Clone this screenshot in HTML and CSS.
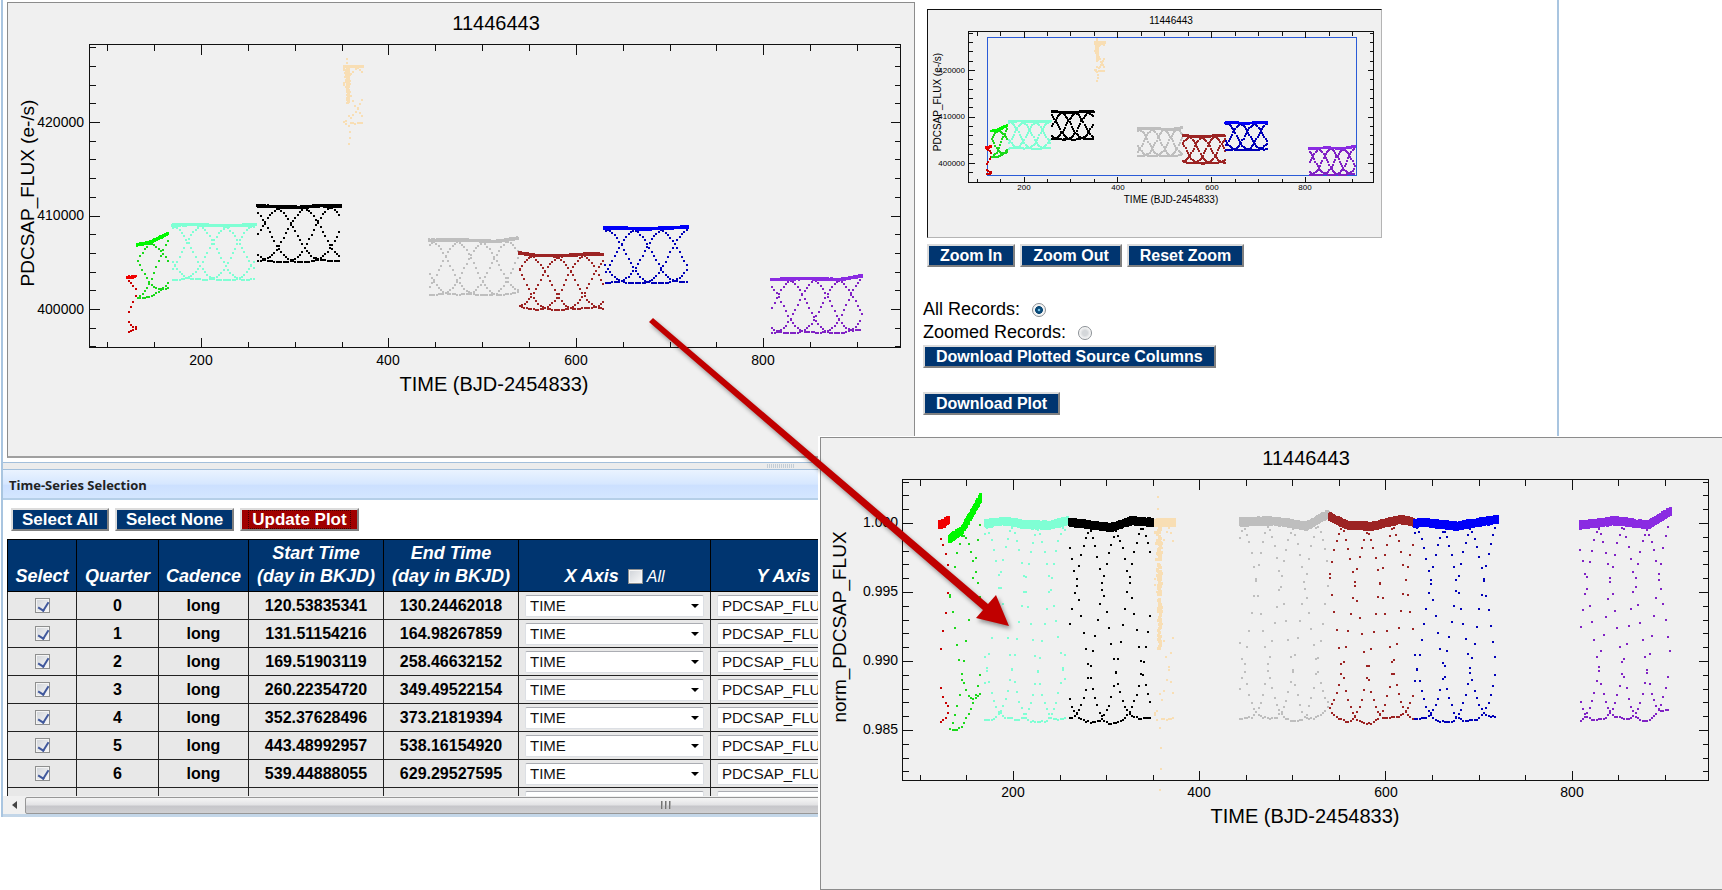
FILE: index.html
```html
<!DOCTYPE html>
<html lang="en">
<head>
<meta charset="utf-8">
<title>11446443 time series</title>
<link rel="stylesheet" href="styles.css">
</head>
<body>
<main class="stage">
  <div class="workbench">
    <section class="top">
      <div class="plot">
        <svg id="flux" viewBox="8 3 906 453">
          <g class="label">
            <text x="496" y="30">11446443</text>
            <text x="494" y="391">TIME (BJD-2454833)</text>
            <text class="vertical" transform="translate(34 193) rotate(-90)">PDCSAP_FLUX (e-/s)</text>
          </g>
          <g class="tick">
            <text x="201" y="365">200</text><text x="388" y="365">400</text><text x="576" y="365">600</text><text x="763" y="365">800</text>
          </g>
          <g class="tick end">
            <text x="84" y="127">420000</text><text x="84" y="220">410000</text><text x="84" y="314">400000</text>
          </g>
        </svg>
      </div>
      <div class="side">
        <div class="overview">
          <svg id="mini" viewBox="928 10 453 227">
            <g class="label small">
              <text x="1171" y="24">11446443</text>
              <text x="1171" y="203">TIME (BJD-2454833)</text>
              <text transform="translate(941 102) rotate(-90)">PDCSAP_FLUX (e-/s)</text>
            </g>
            <g class="tick small">
              <text x="1024" y="190">200</text><text x="1118" y="190">400</text><text x="1212" y="190">600</text><text x="1305" y="190">800</text>
            </g>
            <g class="tick small end">
              <text x="965" y="73">420000</text><text x="965" y="119">410000</text><text x="965" y="166">400000</text>
            </g>
            <rect class="window" x="987.5" y="37.5" width="369" height="138"/>
          </svg>
        </div>
        <div class="row zoom">
          <button class="btn">Zoom In</button>
          <button class="btn">Zoom Out</button>
          <button class="btn">Reset Zoom</button>
        </div>
        <div class="records">
          <div class="record"><label for="all">All Records:</label><input type="radio" id="all" name="records" checked></div>
          <div class="record"><label for="zoomed">Zoomed Records:</label><input type="radio" id="zoomed" name="records"></div>
        </div>
        <div class="downloads">
          <button class="btn">Download Plotted Source Columns</button>
          <button class="btn">Download Plot</button>
        </div>
      </div>
    </section>
    <div class="splitter"><span class="grip"></span></div>
    <section class="selection">
      <h2 class="heading">Time-Series Selection</h2>
      <div class="row toolbar">
        <button class="btn big">Select All</button>
        <button class="btn big">Select None</button>
        <button class="btn big update"><span>Update Plot</span></button>
      </div>
      <div class="viewport">
        <table class="grid">
          <colgroup><col class="c-select"><col class="c-quarter"><col class="c-cadence"><col class="c-time"><col class="c-time"><col class="c-axis"><col class="c-axis"></colgroup>
          <thead>
            <tr>
              <th>Select</th><th>Quarter</th><th>Cadence</th><th>Start Time<br>(day in BKJD)</th><th>End Time<br>(day in BKJD)</th>
              <th><span class="axis">X Axis <input type="checkbox" id="xall"><label for="xall">All</label></span></th>
              <th><span class="axis">Y Axis <input type="checkbox" id="yall"><label for="yall">All</label></span></th>
            </tr>
          </thead>
          <tbody id="rows"></tbody>
        </table>
      </div>
      <div class="scrollbar"><span class="arrow"></span><span class="thumb"><i></i><i></i><i></i></span></div>
    </section>
  </div>

  <div class="popup">
    <div class="popup-frame">
      <svg id="norm" viewBox="821 438 901 451">
        <g class="label">
          <text x="1306" y="465">11446443</text>
          <text x="1305" y="823">TIME (BJD-2454833)</text>
          <text class="vertical" transform="translate(846 627) rotate(-90)">norm_PDCSAP_FLUX</text>
        </g>
        <g class="tick">
          <text x="1013" y="797">200</text><text x="1199" y="797">400</text><text x="1386" y="797">600</text><text x="1572" y="797">800</text>
        </g>
        <g class="tick end">
          <text x="898" y="527">1.000</text><text x="898" y="596">0.995</text><text x="898" y="665">0.990</text><text x="898" y="734">0.985</text>
        </g>
      </svg>
    </div>
  </div>
  <svg class="pointer" viewBox="0 0 400 340" aria-hidden="true">
    <path d="M13 8 L348 294 L356 285 L369 316 L336 308 L343 300 L9 12 Z" fill="#c00000"/>
  </svg>
</main>
<script src="plots.js"></script>
</body>
</html>
```

FILE: styles.css
```css
* { box-sizing: border-box; }
body { margin: 0; background: #fff; color: #000; font-family: "Liberation Sans", Arial, sans-serif; }
button, select, input { font-family: inherit; margin: 0; }
svg { display: block; width: 100%; height: auto; }

.stage { position: relative; overflow: hidden; min-height: 100vh; }
.workbench { max-width: 1558px; margin-left: 1px; border: 2px solid #a9c5e0; border-width: 0 2px; }
.top { display: flex; align-items: flex-start; padding: 2px 0 5px 4px; }
.plot { flex: 0 1 908px; background: #f0f0f0; border: 1px solid #8c8c8c; border-bottom: 2px solid #a0a0a0; margin-bottom: -1px; }
.side { flex: 1; padding: 7px 0 0 8px; min-width: 0; }
.overview { max-width: 455px; margin-left: 4px; background: #f0f0f0; border: 1px solid #111; border-right-color: #b4b4b4; border-bottom-color: #b4b4b4; }

.label { font-size: 20px; text-anchor: middle; }
.label .vertical { font-size: 19px; }
.tick { font-size: 14px; text-anchor: middle; }
.end { text-anchor: end; }
.label.small { font-size: 10px; }
.tick.small { font-size: 8px; }
.frame, .ticks { fill: none; stroke: #111; stroke-width: 1; shape-rendering: crispEdges; }
.dots { fill: none; shape-rendering: crispEdges; }
.window { fill: none; stroke: #2a5bd7; shape-rendering: crispEdges; }

.row { display: flex; }
.btn { height: 23px; padding: 0 11px; border: 2px solid; border-color: #dcdcdc #808080 #808080 #dcdcdc; background: #003570; color: #fff; font-size: 16px; font-weight: bold; line-height: 18px; white-space: nowrap; }
.btn.big { padding: 0 9px; font-size: 17px; }
.btn.update { background: #a00000; padding: 0 6px; }
.update span { display: block; padding: 0 3px; border: 1px dotted #400000; line-height: 17px; }
.zoom { gap: 5px; padding: 6px 0 0 4px; }
.records { padding-top: 31px; font-size: 18px; }
.record { display: flex; align-items: center; gap: 12px; height: 23px; }
.record input { appearance: none; width: 14px; height: 14px; border: 1px solid #8a8f94; border-radius: 50%; background: radial-gradient(circle, #d4d7da 30%, #fafafa 70%); }
.record input:checked { background: radial-gradient(circle, #7cc8ec 8%, #0b4a78 20%, #0b4a78 42%, #f4f4f4 50%); }
.downloads { display: flex; flex-direction: column; align-items: flex-start; gap: 24px; padding-top: 1px; }

.splitter { display: flex; justify-content: center; align-items: center; height: 8px; background: #ececec; border-top: 1px solid #a3bfdb; border-bottom: 1px solid #a3bfdb; }
.grip { width: 27px; height: 4px; background: repeating-linear-gradient(90deg, #c3cdd6 0 1px, #ececec 1px 2px); }
.heading { margin: 0; height: 30px; padding-left: 6px; border-bottom: 2px solid #b5cfe8; background: linear-gradient(#eaf3ff, #d6e7ff 50%, #cce0ff 55%, #d4e6ff); color: #222; font: bold 13px/30px "Open Sans", "Noto Sans", sans-serif; }
.toolbar { gap: 6px; padding: 8px 0 8px 8px; }
.viewport { height: 257px; overflow: hidden; padding-left: 4px; }
.selection { border-bottom: 3px solid #c3d6e8; }

.grid { width: 894px; table-layout: fixed; border-collapse: collapse; }
.c-select { width: 69px; }
.c-quarter { width: 82px; }
.c-cadence { width: 90px; }
.c-time { width: 135px; }
.c-axis { width: 192px; }
.grid th { height: 52px; padding: 2px 0 3px; background: #003570; color: #fff; border: 1px solid #000; font-size: 18px; font-style: italic; line-height: 23px; vertical-align: bottom; white-space: nowrap; }
.grid td { height: 28px; padding: 0; background: #e8e8e8; border: 1px solid #222; font-size: 16px; font-weight: bold; text-align: center; vertical-align: middle; }
.axis { display: inline-flex; align-items: center; gap: 4px; }
.axis input { margin-left: 5px; }
.axis label { font-size: 16px; font-weight: normal; }
.grid input { appearance: none; position: relative; display: block; width: 15px; height: 15px; border: 1px solid #8e8f8f; background: linear-gradient(135deg, #cfd3d8, #fafafa); box-shadow: inset 0 0 0 1px #f4f4f4; }
.grid td input { margin: 0 auto; }
.grid input:checked::after { content: ""; position: absolute; left: 4px; top: 1px; width: 5px; height: 9px; border: solid #40589c; border-width: 0 2px 2px 0; transform: rotate(32deg); }
.pick { display: block; position: relative; margin: 0 6px; }
.pick::after { content: ""; position: absolute; right: 5px; top: 9px; border: 4px solid transparent; border-top-color: #000; border-bottom: 0; }
.pick select { display: block; appearance: none; width: 100%; height: 22px; padding: 0 4px; border: 1px solid #dcdfe4; border-top-color: #abadb3; border-radius: 2px; background: #fff; color: #111; font-size: 15px; }

.scrollbar { display: flex; align-items: center; height: 18px; background: #f0f0f0; }
.arrow { width: 22px; display: flex; justify-content: center; }
.arrow::after { content: ""; border: 4px solid transparent; border-right: 5px solid #444; border-left: 0; }
.thumb { display: flex; justify-content: center; align-items: center; gap: 2px; width: 82.5%; height: 17px; border: 1px solid #979797; border-radius: 2px; background: linear-gradient(#f5f5f5, #e3e3e5 45%, #c6c6ca 55%, #d0d0d3); }
.thumb i { width: 2px; height: 8px; background: linear-gradient(90deg, #555, #ccc); }

.popup { position: absolute; left: 818px; right: 0; top: 436px; padding: 1px 0 0 2px; background: #fff; }
.popup-frame { border: 1px solid #8c8c8c; border-right: 0; background: #f0f0f0; }
.pointer { position: absolute; left: 640px; top: 310px; width: 400px; filter: drop-shadow(2px 3px 2px rgba(0, 0, 0, .4)); pointer-events: none; }
```

FILE: plots.js
```js
const SVG = "http://www.w3.org/2000/svg";

// Each series: time span, colour, median flux, out-of-transit trend in parts per thousand.
const series = [
  { t0: 120.53835341, t1: 130.24462018, color: "#c80000", band: "#f00000", median: 403400, trend: [[0, -.1], [.5, 0], [1, .3]] },
  { t0: 131.51154216, t1: 164.98267859, color: "#1bd81b", band: "#00f800", median: 407300, trend: [[0, -1.1], [.4, -.5], [.7, .7], [1, 1.9]] },
  { t0: 169.51903119, t1: 258.46632152, color: "#7fffd4", median: 408960, trend: [[0, 0], [.25, .2], [.5, -.1], [.8, -.1], [1, .2]] },
  { t0: 260.22354720, t1: 349.49522154, color: "#000000", median: 410980, trend: [[0, .1], [.5, -.3], [.75, .2], [1, .1]] },
  { t0: 352.37628496, t1: 373.21819394, color: "#f8deb4", median: 425900, trend: [[0, .05], [1, .1]], dip: true },
  { t0: 443.48992957, t1: 538.16154920, color: "#bebebe", median: 407300, trend: [[0, .1], [.3, .2], [.5, .1], [.75, -.2], [1, .7]] },
  { t0: 539.44888055, t1: 629.29527595, color: "#9c2424", median: 405780, trend: [[0, .5], [.2, -.1], [.5, -.2], [.85, .3], [1, .1]] },
  { t0: 630.19546, t1: 719.54844, color: "#0000b8", band: "#0000f8", median: 408640, trend: [[0, 0], [.1, .1], [.5, -.2], [1, .3]] },
  { t0: 808.51558, t1: 905.92602, color: "#8022c4", band: "#8a2be2", median: 403190, trend: [[0, -.1], [.4, .2], [.75, -.1], [1, .9]] }
];

const PERIOD = 2.470613, EPOCH = 122.763, CADENCE = 0.0204336;
let seed = 7;
const rand = () => (seed = (seed * 16807) % 2147483647) / 2147483647;

function trend(points, f) {
  for (let i = 1; i < points.length; i++) {
    const [a, u] = points[i - 1], [b, v] = points[i];
    if (f <= b) return u + (v - u) * (f - a) / (b - a);
  }
  return points[points.length - 1][1];
}

function eclipse(dt) {
  let sum = 0;
  for (let k = -3; k <= 3; k++) {
    const t = dt + k * CADENCE / 7;
    const z = Math.sqrt(0.7293 + (t / 0.0509) ** 2);
    const x = Math.max(0, Math.min(1, (1.125 - z) / 0.25));
    sum += x * x * (3 - 2 * x);
  }
  return sum / 7 * 14.3;
}

for (const s of series) {
  const n = Math.round((s.t1 - s.t0) / CADENCE);
  s.points = [];
  for (let i = 0; i <= n; i++) {
    const t = s.t0 + (s.t1 - s.t0) * i / n;
    const phase = (t - EPOCH) / PERIOD;
    const depth = eclipse((phase - Math.round(phase)) * PERIOD);
    let v = trend(s.trend, i / n) - depth + (rand() + rand() - 1) * (depth > .1 ? .08 : .25);
    if (s.dip && t > 355.8 && t < 358.6) v -= rand() * 9.2;
    if (s.dip && t < 355.8 && rand() < .12) v -= rand() * 4;
    s.points.push([t, 1 + v / 1000, depth > .1]);
  }
  if (s.dip) s.points.push([356, 1.0019, true], [356, 1.001, true], [359, .9837, true], [359, .9822, true]);
}

function add(svg, cls, d, extra = {}) {
  const p = document.createElementNS(SVG, "path");
  p.setAttribute("class", cls);
  p.setAttribute("d", d);
  for (const k in extra) p.setAttribute(k, extra[k]);
  svg.appendChild(p);
}

function draw(id, c) {
  const svg = document.getElementById(id);
  const { left: l, right: r, top: t, bottom: b } = c;
  add(svg, "frame", `M${l} ${t}H${r}V${b}H${l}Z`);
  let d = "";
  for (let x = 100; x <= 900; x += 50) {
    const px = Math.round(c.x(x)) + .5, len = x % 200 ? c.minor : c.major;
    d += `M${px} ${t}v${len}M${px} ${b}v${-len}`;
  }
  c.yTicks.forEach(([v, major]) => {
    const py = Math.round(c.y(v)) + .5, len = major ? c.major : c.minor;
    d += `M${l} ${py}h${len}M${r} ${py}h${-len}`;
  });
  add(svg, "ticks", d);
  for (const s of series) {
    const seen = [new Set(), new Set()];
    for (const [time, v, inside] of s.points) {
      const y = c.y(c.flux ? v * s.median : v);
      seen[inside ? 0 : 1].add(`M${Math.round(c.x(time)) - 1} ${Math.round(y)}`);
    }
    seen.forEach((set, i) => add(svg, "dots", [...set].map(m => m + `h${i ? c.band : c.dot}`).join(""),
      { stroke: i && s.band ? s.band : s.color, "stroke-width": i ? c.band : c.dot }));
  }
}

const range = (from, to, step, major) => {
  const out = [];
  for (let i = from; i <= to; i += step) out.push([i, i % major === 0]);
  return out;
};
const fluxTicks = range(396000, 428000, 2000, 10000);

draw("flux", { left: 89.5, right: 900.5, top: 44.5, bottom: 347.5, minor: 6, major: 10, flux: true, dot: 2, band: 2,
  x: t => 201 + (t - 200) * .937, y: v => 309 - (v - 400000) * .00935, yTicks: fluxTicks });
draw("mini", { left: 968.5, right: 1373.5, top: 31.5, bottom: 182.5, minor: 4, major: 6, flux: true, dot: 2, band: 2,
  x: t => 1023.5 + (t - 200) * .4695, y: v => 163 - (v - 400000) * .00465, yTicks: fluxTicks });
draw("norm", { left: 902.5, right: 1708.5, top: 479.5, bottom: 780.5, minor: 6, major: 10, dot: 2, band: 3,
  x: t => 1013 + (t - 200) * .931, y: v => 523 - (v - 1) * 13800,
  yTicks: range(982, 1003, 1, 5).map(([v, m]) => [v / 1000, m]) });

const times = [
  ["120.53835341", "130.24462018"], ["131.51154216", "164.98267859"], ["169.51903119", "258.46632152"],
  ["260.22354720", "349.49522154"], ["352.37628496", "373.21819394"], ["443.48992957", "538.16154920"],
  ["539.44888055", "629.29527595"]
];
const pick = (q, axis, value) =>
  `<span class="pick"><select aria-label="${axis} axis, quarter ${q}"><option>${value}</option></select></span>`;
const rows = times.map(([a, b], q) => `<tr>
  <td><input type="checkbox" checked aria-label="Select quarter ${q}"></td><td>${q}</td><td>long</td><td>${a}</td><td>${b}</td>
  <td>${pick(q, "X", "TIME")}</td><td>${pick(q, "Y", "PDCSAP_FLUX")}</td></tr>`);
rows.push(`<tr><td></td><td></td><td></td><td></td><td></td><td>${pick(7, "X", "")}</td><td>${pick(7, "Y", "")}</td></tr>`);
document.getElementById("rows").innerHTML = rows.join("");
```
